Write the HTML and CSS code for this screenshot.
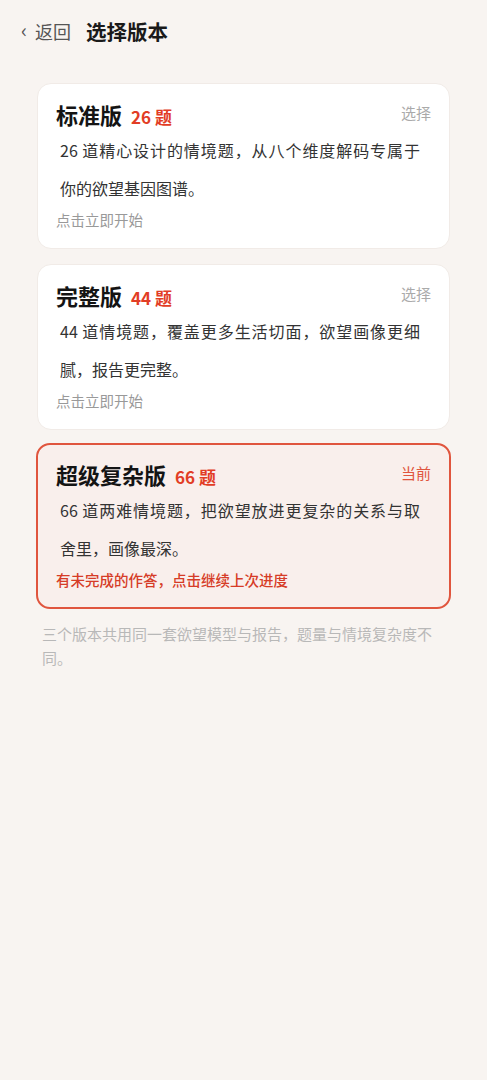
FILE: index.html
```html
<!DOCTYPE html>
<html lang="zh-CN">
<head>
<meta charset="utf-8">
<title>选择版本</title>
<link rel="stylesheet" href="styles.css">
</head>
<body>
<div class="page">
  <header class="topbar">
    <span class="back"><span class="chev">‹</span>返回</span>
    <h1 class="title">选择版本</h1>
  </header>
  <main class="list">
    <section class="card">
      <div class="card-head">
        <div class="name">标准版<span class="count">26 题</span></div>
        <span class="action">选择</span>
      </div>
      <p class="desc"><span class="line full">26 道精心设计的情境题，从八个维度解码专属于</span><span class="line">你的欲望基因图谱。</span></p>
      <p class="hint">点击立即开始</p>
    </section>
    <section class="card">
      <div class="card-head">
        <div class="name">完整版<span class="count">44 题</span></div>
        <span class="action">选择</span>
      </div>
      <p class="desc"><span class="line full">44 道情境题，覆盖更多生活切面，欲望画像更细</span><span class="line">腻，报告更完整。</span></p>
      <p class="hint">点击立即开始</p>
    </section>
    <section class="card current">
      <div class="card-head">
        <div class="name">超级复杂版<span class="count">66 题</span></div>
        <span class="action">当前</span>
      </div>
      <p class="desc"><span class="line full">66 道两难情境题，把欲望放进更复杂的关系与取</span><span class="line">舍里，画像最深。</span></p>
      <p class="hint">有未完成的作答，点击继续上次进度</p>
    </section>
    <p class="note">三个版本共用同一套欲望模型与报告，题量与情境复杂度不同。</p>
  </main>
</div>
</body>
</html>
```
FILE: styles.css
```css
* { box-sizing: border-box; }
html, body {
  margin: 0;
  padding: 0;
  background: #f8f4f1;
  font-family: "Noto Sans CJK SC", "Noto Sans", sans-serif;
  color: #222;
}
.page {
  min-height: 1080px;
  background: #f8f4f1;
}
.topbar {
  display: flex;
  align-items: center;
  height: 62px;
  padding: 0 0 0 21px;
}
.back {
  display: flex;
  align-items: center;
  font-size: 18px;
  color: #555;
  margin-right: 15px;
}
.chev {
  font-size: 20px;
  margin-right: 8px;
  line-height: 1;
  position: relative;
  top: -1px;
}
.title {
  margin: 0;
  font-size: 20.5px;
  font-weight: 700;
  color: #1a1a1a;
}
.list {
  padding: 21px 37px 0 37px;
  display: flex;
  flex-direction: column;
  gap: 15px;
}
.card {
  background: #ffffff;
  border-radius: 14px;
  padding: 14px 18px 0 18px;
  height: 166px;
  border: 1px solid #f1ebe7;
}
.card-head {
  display: flex;
  justify-content: space-between;
  align-items: flex-start;
}
.name {
  font-size: 22px;
  font-weight: 700;
  color: #141414;
  line-height: 32px;
  display: flex;
  align-items: baseline;
}
.count {
  font-size: 17px;
  color: #e23d25;
  margin-left: 9px;
  font-weight: 700;
}
.action {
  font-size: 15px;
  color: #aaa;
  line-height: 24px;
  margin-top: 3px;
}
.desc {
  margin: -2px 0 0 0;
  width: 364px;
  padding-left: 4px;
  font-size: 16px;
  line-height: 38px;
  color: #333;
}
.line {
  display: block;
  white-space: nowrap;
}
.line.full {
  text-align: justify;
  text-align-last: justify;
}
.hint {
  margin: 3px 0 0 0;
  font-size: 14.5px;
  color: #999;
  line-height: 20px;
}
.card.current {
  background: #f9efec;
  border: 2px solid #e0553e;
  margin: -2px -1px 0 -1px;
  padding: 13px 18px 0 18px;
}
.current .action { color: #e0553e; }
.current .hint { color: #d63c27; font-weight: 500; }
.note {
  margin: -2px 0 0 0;
  padding: 0 6px 0 5px;
  font-size: 15px;
  line-height: 24px;
  color: #b8b8b8;
}
```
